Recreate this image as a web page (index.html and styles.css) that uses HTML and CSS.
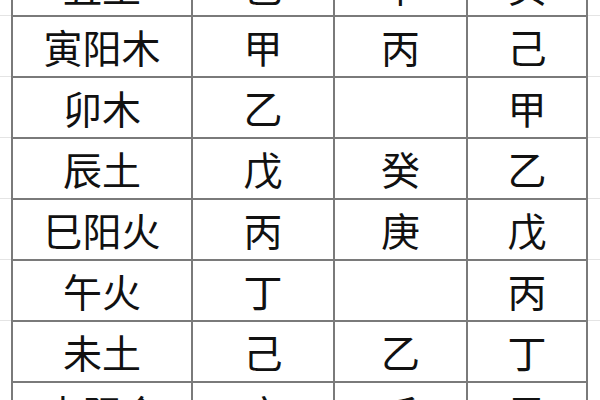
FILE: index.html
```html
<!DOCTYPE html>
<html lang="zh">
<head>
<meta charset="utf-8">
<link rel="stylesheet" href="styles.css">
</head>
<body>
<div class="sheet">
  <div class="grid">
    <div class="cell">丑土</div><div class="cell">己</div><div class="cell">辛</div><div class="cell">癸</div>
    <div class="cell">寅阳木</div><div class="cell">甲</div><div class="cell">丙</div><div class="cell">己</div>
    <div class="cell">卯木</div><div class="cell">乙</div><div class="cell"></div><div class="cell">甲</div>
    <div class="cell">辰土</div><div class="cell">戊</div><div class="cell">癸</div><div class="cell">乙</div>
    <div class="cell">巳阳火</div><div class="cell">丙</div><div class="cell">庚</div><div class="cell">戊</div>
    <div class="cell">午火</div><div class="cell">丁</div><div class="cell"></div><div class="cell">丙</div>
    <div class="cell">未土</div><div class="cell">己</div><div class="cell">乙</div><div class="cell">丁</div>
    <div class="cell">申阳金</div><div class="cell">庚</div><div class="cell">壬</div><div class="cell">己</div>
  </div>
</div>
</body>
</html>
```
FILE: styles.css
```css
html, body {
  margin: 0;
  padding: 0;
}
body {
  width: 600px;
  height: 400px;
  overflow: hidden;
  background-color: #ffffff;
  background-image: repeating-linear-gradient(to bottom, transparent 0, transparent 60px, #e4e4e4 60px, #e4e4e4 61px);
  background-position: 0 -45px;
  font-family: "Noto Sans CJK SC", "Noto Sans", sans-serif;
}
.sheet {
  width: 600px;
  height: 400px;
  overflow: hidden;
}
.grid {
  display: grid;
  grid-template-columns: 178px 140px 131px 118px;
  grid-auto-rows: 59px;
  gap: 2px;
  padding: 2px;
  background: #7a7a7a;
  width: max-content;
  margin-left: 11px;
  margin-top: -46px;
}
.cell {
  background: #ffffff;
  display: flex;
  align-items: center;
  justify-content: center;
  font-size: 39px;
  line-height: 1;
  color: #111111;
  font-weight: 400;
}
```
